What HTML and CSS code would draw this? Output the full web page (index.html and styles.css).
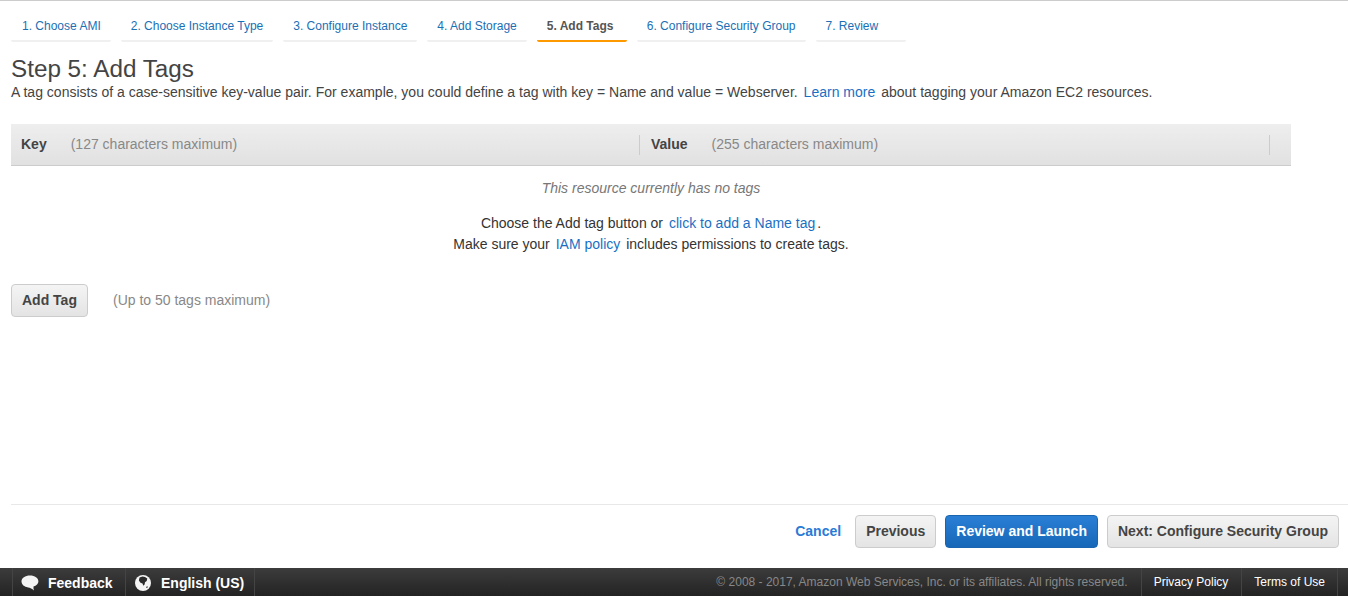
FILE: index.html
```html
<!DOCTYPE html>
<html lang="en">
<head>
<meta charset="utf-8">
<title>Step 5: Add Tags</title>
<link rel="stylesheet" href="styles.css">
</head>
<body>
<div class="page">
  <main class="content">
    <nav class="tabs">
      <a class="tab">1. Choose AMI</a>
      <a class="tab">2. Choose Instance Type</a>
      <a class="tab">3. Configure Instance</a>
      <a class="tab">4. Add Storage</a>
      <a class="tab active">5. Add Tags</a>
      <a class="tab">6. Configure Security Group</a>
      <a class="tab">7. Review</a>
    </nav>
    <h1 class="title">Step 5: Add Tags</h1>
    <p class="desc">A tag consists of a case-sensitive key-value pair. For example, you could define a tag with key = Name and value = Webserver. <a class="link">Learn more</a> about tagging your Amazon EC2 resources.</p>
    <div class="thead">
      <div class="th th-key"><b>Key</b><span class="hint">(127 characters maximum)</span></div>
      <div class="th th-value"><b>Value</b><span class="hint">(255 characters maximum)</span></div>
      <div class="th-end"></div>
    </div>
    <p class="empty">This resource currently has no tags</p>
    <div class="help">
      <p>Choose the Add tag button or <a class="link">click to add a Name tag</a>.</p>
      <p>Make sure your <a class="link">IAM policy</a> includes permissions to create tags.</p>
    </div>
    <div class="addrow">
      <button class="btn">Add Tag</button>
      <span class="hint addhint">(Up to 50 tags maximum)</span>
    </div>
    <div class="actions">
      <a class="cancel">Cancel</a>
      <button class="btn">Previous</button>
      <button class="btn primary">Review and Launch</button>
      <button class="btn">Next: Configure Security Group</button>
    </div>
  </main>
  <footer class="footer">
    <a class="fitem feedback">
      <svg class="ficon" width="18" height="16" viewBox="0 0 18 16"><path fill="#f4f4f4" d="M9 0.5C4.200 0.500 0.500 3 0.500 6.500c0 3 2.800 5.400 6.600 5.900 2 .3 4 1.200 5.900 3-.5-1.300-.7-2.600-.5-3.900 2.900-.9 4.900-2.900 4.900-5C17.400 3 13.800 .5 9 .5z"/></svg>
      <span class="ftext">Feedback</span>
    </a>
    <a class="fitem lang">
      <svg class="ficon" width="16" height="16" viewBox="0 0 16 16"><circle cx="8" cy="8" r="8" fill="#f4f4f4"/><path fill="#2b2b2b" d="M4.500 2.500l3-1 2.500.6 2.300 1.500-.6 2.400-1.700 1.300-.4 2.200-1.300 1.200-.8-2.200-2-.7-1.600-2.400zM11 12l1.500-.8.4 1-1.300.9z"/></svg>
      <span class="ftext">English (US)</span>
    </a>
    <span class="copy">© 2008 - 2017, Amazon Web Services, Inc. or its affiliates. All rights reserved.</span>
    <a class="flink">Privacy Policy</a>
    <a class="flink">Terms of Use</a>
  </footer>
</div>
</body>
</html>
```
FILE: styles.css
```css
* { box-sizing: border-box; }
html, body { margin: 0; padding: 0; height: 100%; overflow: hidden; }
body { font-family: "Liberation Sans", Arial, sans-serif; color: #444; background: #fff; }
p { margin: 0; }
.page { height: 596px; display: flex; flex-direction: column; border-top: 1px solid #ccc; }
.content { flex: 1; display: flex; flex-direction: column; padding-left: 11px; min-height: 0; }
.tabs { display: flex; gap: 10px; margin-top: 12px; }
.tab { height: 29px; min-width: 90px; padding: 6px 10px 0 11px; font-size: 12px; line-height: 14px; color: #1a6fb5; border-bottom: 2px solid #f0f0f0; border-radius: 2px; white-space: nowrap; }
.tab + .tab { padding-left: 10px; }
.tab.active { color: #555; font-weight: bold; border-bottom-color: #f90; }
.title { margin: 13px 0 0; font-size: 24.25px; font-weight: normal; line-height: 27px; color: #444; }
.desc { font-size: 14px; line-height: 18px; color: #444; margin-top: 1px; letter-spacing: 0.008px; }
.link { color: #1a6fc4; margin: 0 2px; }
.thead { width: 1280px; height: 42px; margin-top: 23px; display: flex; align-items: center; background: linear-gradient(#eee, #e1e1e1); border-bottom: 1px solid #ccc; font-size: 14px; }
.th { display: flex; align-items: center; height: 20px; padding-left: 10px; padding-bottom: 2px; }
.th b { color: #444; }
.th-key { width: 628px; }
.th-value { width: 630px; border-left: 1px solid #ccc; padding-left: 11px; }
.th-key .hint { margin-left: 24px; }
.th-value .hint { margin-left: 24px; }
.th-end { height: 20px; border-left: 1px solid #ccc; }
.hint { color: #888; font-size: 14px; }
.empty { width: 1280px; text-align: center; margin-top: 14px; font-size: 14px; line-height: 17px; font-style: italic; color: #777; }
.help { width: 1280px; text-align: center; margin-top: 16px; font-size: 14px; line-height: 21px; color: #333; }
.addrow { display: flex; align-items: center; margin-top: 29px; }
.addhint { margin-left: 25px; padding-bottom: 2px; }
.btn { height: 33px; padding: 0 10px 2px; font: bold 14px "Liberation Sans", Arial, sans-serif; color: #444; background: linear-gradient(#f4f4f4, #e4e4e4); border: 1px solid #ccc; border-radius: 4px; white-space: nowrap; }
.btn.primary { color: #fff; background: linear-gradient(#2a7fd5, #1667b8); border-color: #1a65b0; }
.actions { margin-top: auto; margin-bottom: 20px; padding: 10px 9px 0 0; border-top: 1px solid #e8e8e8; display: flex; justify-content: flex-end; align-items: center; gap: 9px; }
.cancel { color: #2a7bd6; font-size: 14px; font-weight: bold; margin-right: 5px; padding-bottom: 2px; }
.footer { height: 28px; display: flex; align-items: stretch; padding-left: 12px; background: linear-gradient(#3c3c3c, #232323); font-size: 14px; color: #fff; }
.fitem { display: flex; align-items: center; gap: 9px; font-weight: bold; border-left: 1px solid #444; }
.ftext { padding-top: 2px; }
.ficon { margin-top: 2px; }
.feedback { width: 113px; padding-left: 8px; }
.lang { width: 130px; padding-left: 9px; gap: 10px; border-right: 1px solid #444; }
.copy { margin-left: auto; align-self: center; font-size: 12px; color: #888; margin-right: 13px; }
.flink { display: flex; align-items: center; font-size: 12px; color: #fff; padding: 0 13px 0 12px; border-left: 1px solid #444; }
.flink:last-child { border-right: 1px solid #444; padding-right: 12px; margin-right: 10px; }
```
